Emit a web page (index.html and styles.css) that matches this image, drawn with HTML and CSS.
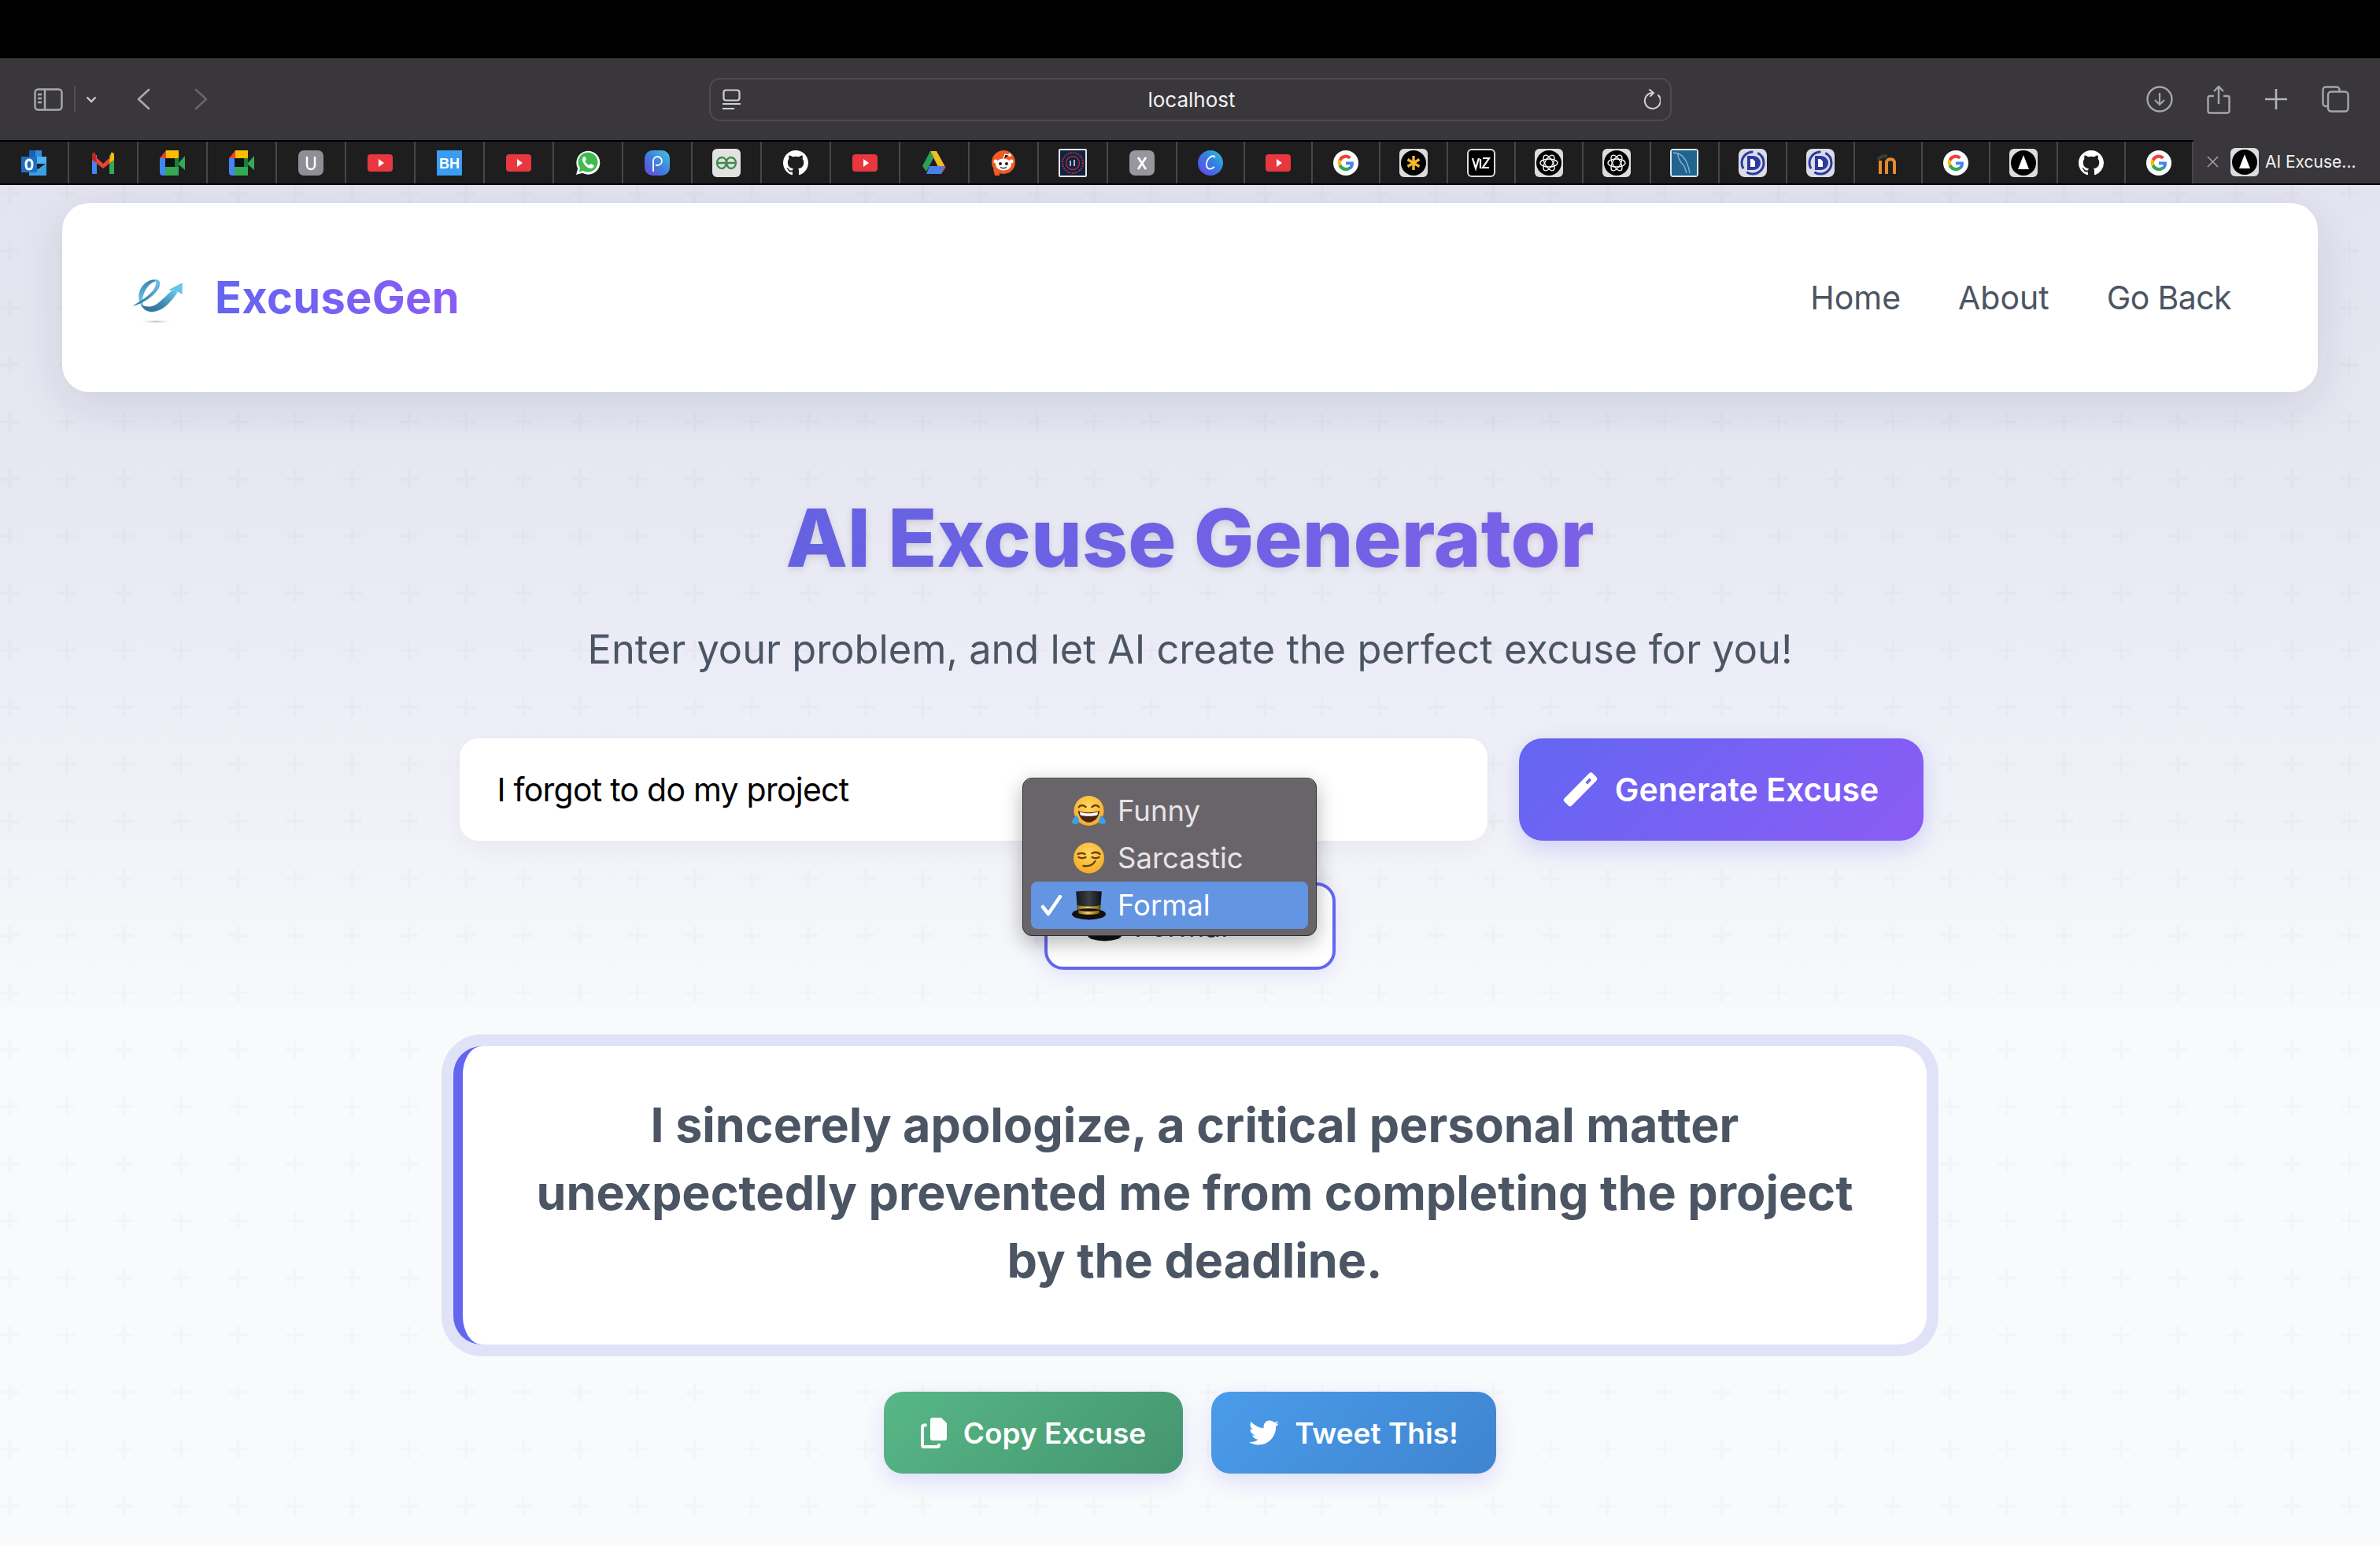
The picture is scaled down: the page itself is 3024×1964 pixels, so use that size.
FILE: index.html
```html
<!DOCTYPE html>
<html lang="en">
<head>
<meta charset="utf-8">
<title>AI Excuse Generator</title>
<link rel="stylesheet" href="styles.css">
</head>
<body>
<svg class="sprite" xmlns="http://www.w3.org/2000/svg">
  <defs>
    <linearGradient id="gp" x1="0" y1="1" x2="1" y2="0"><stop offset="0" stop-color="#6a45d8"/><stop offset=".5" stop-color="#3f7fe0"/><stop offset="1" stop-color="#46c8d8"/></linearGradient>
    <linearGradient id="gc" x1="0" y1="1" x2="1" y2="0"><stop offset="0" stop-color="#6a3cf0"/><stop offset=".6" stop-color="#2f86e0"/><stop offset="1" stop-color="#35c8d0"/></linearGradient>
    <linearGradient id="gl0" x1="0" y1="1" x2="1" y2="0"><stop offset="0" stop-color="#2b6a94"/><stop offset=".45" stop-color="#3f86ae"/><stop offset="1" stop-color="#6cc6ec"/></linearGradient>
    <linearGradient id="gl1" x1="0" y1="0" x2="0" y2="1"><stop offset="0" stop-color="#3b7fa9"/><stop offset=".6" stop-color="#5fb6dd"/><stop offset="1" stop-color="#7fd0f0"/></linearGradient>
    <linearGradient id="gl2" x1="1" y1="0" x2="0" y2="1"><stop offset="0" stop-color="#6ec8ee"/><stop offset=".5" stop-color="#4c98c2"/><stop offset="1" stop-color="#286490"/></linearGradient>
    <radialGradient id="gs"><stop offset="0" stop-color="#b9b9b9"/><stop offset="1" stop-color="#fff" stop-opacity="0"/></radialGradient>
    <radialGradient id="em" cx=".5" cy=".35" r=".7"><stop offset="0" stop-color="#ffd95e"/><stop offset="1" stop-color="#f5a623"/></radialGradient>
    <linearGradient id="gold" x1="0" y1="0" x2="1" y2="0"><stop offset="0" stop-color="#8a6410"/><stop offset=".45" stop-color="#f0d060"/><stop offset="1" stop-color="#7a5608"/></linearGradient>
    <linearGradient id="hat" x1="0" y1="0" x2="1" y2="0"><stop offset="0" stop-color="#15171b"/><stop offset=".5" stop-color="#3a3e46"/><stop offset="1" stop-color="#101114"/></linearGradient>
  </defs>
  <symbol id="i-outlook" viewBox="0 0 32 32"><path fill="#1b5fb0" d="M10 0h16v8H10z"/><path fill="#2f8fdc" d="M18 0h8v8h-8z"/><path fill="#1f79cc" d="M10 8h8v9h-8z"/><path fill="#52b2ee" d="M18 8h14v9H18z"/><path fill="#3aa0e6" d="M10 16l11 8 11-8v16H10z"/><path fill="#1f6fc0" d="M0 8h20v20H0z"/><path fill="none" stroke="#fff" stroke-width="3" d="M10 12c-3 0-4 2.500-4 6s1 6 4 6 4-2.500 4-6-1-6-4-6z"/></symbol>
  <symbol id="i-gmail" viewBox="0 0 32 32"><path fill="#4285f4" d="M2 6h6v24H2z"/><path fill="#34a853" d="M24 6h6v24h-6z"/><path fill="#ea4335" d="M2 4l14 13L30 4v8L16 23 2 12z"/><path fill="#fbbc04" d="M26 3c3-1 4 1 4 3v6l-6 4z"/><path fill="#c5221f" d="M6 3C3 2 2 4 2 6v6l6 4z"/></symbol>
  <symbol id="i-meet" viewBox="0 0 32 32"><path fill="#fbbc04" d="M8 0h16v10H8z"/><path fill="#ea4335" d="M0 10L8 0v10z"/><path fill="#4285f4" d="M0 10h7v22H4a4 4 0 0 1-4-4z"/><path fill="#34a853" d="M7 21h17v11H7z"/><path fill="#111" d="M7 10h12v11H7z"/><path fill="#34a853" d="M24 16l8-9v18l-8-7z"/><path fill="#188038" d="M19 10h5v11h-5z"/></symbol>
  <symbol id="i-u" viewBox="0 0 32 32"><rect width="32" height="32" rx="7" fill="#8e8e96"/><path fill="none" stroke="#fff" stroke-width="2.500" d="M11 8v11a5 5 0 0 0 10 0V8"/></symbol>
  <symbol id="i-yt" viewBox="0 0 32 32"><rect y="5" width="32" height="22" rx="4" fill="#e8373e"/><path fill="#fff" d="M14 11l7 5-7 5z"/></symbol>
  <symbol id="i-wa" viewBox="0 0 32 32"><path fill="#fff" d="M1 31l2.200-8A15 15 0 1 1 9 28.800z"/><path fill="#3fbb4f" d="M4.500 27.500l1.500-5A12.500 12.500 0 1 1 10 26z"/><path fill="#fff" d="M11 8c-1 .5-2.500 2-2 4.500 1 5 5 9.500 10 10.500 2.500.5 4-1 4.500-2.500l.3-1.500-4.300-2-1.800 2c-2.500-1-4.500-3-5.500-5.500l1.800-1.500L12.500 8z"/></symbol>
  <symbol id="i-p" viewBox="0 0 32 32"><rect width="32" height="32" rx="10" fill="url(#gp)"/><path fill="none" stroke="#fff" stroke-width="1.800" d="M11 27V13a5.500 5.500 0 1 1 5.500 6H14"/></symbol>
  <symbol id="i-gfg" viewBox="0 0 36 36"><rect width="36" height="36" rx="6" fill="#e2e2e0"/><path fill="none" stroke="#3f8b4f" stroke-width="2.300" d="M5 18h26M18 18c0-5-3-7-6-7s-6 3-6 7 3 7 6 7 5-2 6-7c1 5 3 7 6 7s6-3 6-7-3-7-6-7-6 2-6 7"/></symbol>
  <symbol id="i-gh" viewBox="0 0 16 16"><path fill="#fff" d="M8 0C3.580 0 0 3.580 0 8c0 3.540 2.290 6.530 5.470 7.590.4.070.55-.170.55-.380 0-.190-.010-.820-.010-1.490-2.010.370-2.530-.490-2.690-.940-.090-.230-.480-.940-.820-1.130-.280-.150-.680-.520-.010-.530.630-.010 1.080.580 1.230.820.720 1.210 1.870.870 2.330.660.070-.520.280-.870.510-1.070-1.780-.200-3.640-.890-3.640-3.950 0-.870.310-1.590.820-2.150-.080-.200-.360-1.020.080-2.120 0 0 .670-.210 2.200.820.640-.180 1.320-.270 2-.270s1.360.090 2 .270c1.530-1.040 2.200-.820 2.200-.820.440 1.100.160 1.920.080 2.120.510.560.820 1.270.820 2.150 0 3.070-1.870 3.750-3.650 3.950.290.250.540.730.540 1.480 0 1.070-.010 1.930-.010 2.200 0 .210.150.460.550.380A8.010 8.010 0 0 0 16 8c0-4.420-3.580-8-8-8z"/></symbol>
  <symbol id="i-drive" viewBox="0 0 32 32"><path fill="#f2bd1e" d="M11 1h8l11 20h-9z"/><path fill="#2f9e55" d="M11 1l4.500 8L6 27 1 20z"/><path fill="#4a7fe8" d="M10 20h20l-5 10H6z"/><path fill="#d94a38" d="M25 30l6-9h-3z"/></symbol>
  <symbol id="i-reddit" viewBox="0 0 32 32"><circle cx="16" cy="15" r="15" fill="#f25a23"/><path fill="#f25a23" d="M3 24h8v8H5z"/><ellipse cx="16" cy="18" rx="10" ry="7.500" fill="#fff"/><circle cx="6" cy="14" r="2.500" fill="#fff"/><circle cx="26" cy="14" r="2.500" fill="#fff"/><circle cx="12" cy="17" r="2" fill="#1e1e1f"/><circle cx="20" cy="17" r="2" fill="#1e1e1f"/><path fill="none" stroke="#1e1e1f" stroke-width="1.300" d="M12 21.500c2.500 1.500 5.500 1.500 8 0"/><path stroke="#fff" stroke-width="1.300" d="M16 11l2-6 5 1"/><circle cx="24" cy="6" r="2" fill="#fff"/></symbol>
  <symbol id="i-circle" viewBox="0 0 36 36"><rect width="36" height="36" rx="2" fill="#e8e8ec"/><rect x="2" y="2" width="32" height="32" fill="#0e2340"/><circle cx="18" cy="18" r="13" fill="none" stroke="#b4283c" stroke-width="2" stroke-dasharray="2 1.200"/><circle cx="18" cy="18" r="8.500" fill="none" stroke="#b4283c" stroke-width="1.500"/><path stroke="#e8e8ec" stroke-width="1.500" d="M15 15v7M20 14v8"/></symbol>
  <symbol id="i-x" viewBox="0 0 32 32"><rect width="32" height="32" rx="7" fill="#96969e"/><path stroke="#fff" stroke-width="2.800" fill="none" d="M11 9l10 15M21 9L11 24"/></symbol>
  <symbol id="i-canva" viewBox="0 0 32 32"><circle cx="16" cy="16" r="16" fill="url(#gc)"/><path fill="none" stroke="#fff" stroke-width="1.800" d="M22 9c-3-4-10 0-11 8-.6 6 4 9 10 4"/></symbol>
  <symbol id="i-g" viewBox="0 0 32 32"><circle cx="16" cy="16" r="16" fill="#fff"/><path fill="#4285f4" d="M26 16.400c0-.8-.1-1.400-.2-2H16v3.800h5.700c-.2 1.300-1 2.400-2.100 3.200l3.300 2.500c2-1.800 3.100-4.400 3.100-7.500z"/><path fill="#34a853" d="M16 26c2.700 0 5-.9 6.900-2.600l-3.300-2.500c-.9.600-2.100 1-3.600 1-2.700 0-5-1.800-5.800-4.300l-3.400 2.600C8.400 23.700 12 26 16 26z"/><path fill="#fbbc05" d="M10.200 17.600a6 6 0 0 1 0-3.800l-3.400-2.600a10 10 0 0 0 0 9z"/><path fill="#ea4335" d="M16 9.800c1.500 0 2.900.5 3.900 1.500l2.900-2.900A10 10 0 0 0 6.800 11.200l3.400 2.600C11 11.500 13.300 9.800 16 9.800z"/></symbol>
  <symbol id="i-star" viewBox="0 0 36 36"><rect width="36" height="36" rx="6" fill="#dcdcdc"/><circle cx="18" cy="18" r="16" fill="#000"/><path stroke="#f3b82c" stroke-width="3.400" d="M18 9v18M10.500 13.500l15 9M25.500 13.500l-15 9"/></symbol>
  <symbol id="i-v" viewBox="0 0 36 36"><rect width="36" height="36" rx="6" fill="#dcdcdc"/><rect x="2" y="2" width="32" height="32" rx="4" fill="#000"/><path fill="none" stroke="#fff" stroke-width="2.200" d="M7 12l4 13 4-13M17 13v12M20 12h8l-8 12h8"/></symbol>
  <symbol id="i-ai" viewBox="0 0 36 36"><rect width="36" height="36" rx="6" fill="#dcdcdc"/><circle cx="18" cy="18" r="16" fill="#000"/><g fill="none" stroke="#fff" stroke-width="1.300"><ellipse cx="18" cy="18" rx="11" ry="5"/><ellipse cx="18" cy="18" rx="11" ry="5" transform="rotate(60 18 18)"/><ellipse cx="18" cy="18" rx="11" ry="5" transform="rotate(120 18 18)"/></g></symbol>
  <symbol id="i-mysql" viewBox="0 0 36 36"><rect width="36" height="36" rx="4" fill="#dfe6ea"/><rect x="2" y="2" width="32" height="32" fill="#1f6590"/><path fill="none" stroke="#8fb4cc" stroke-width="1.300" d="M4 5c10 0 18 8 21 26M10 5c-1 6 3 12 8 17l3 9"/></symbol>
  <symbol id="i-d" viewBox="0 0 36 36"><rect width="36" height="36" rx="8" fill="#dcdce6"/><circle cx="18" cy="18" r="14" fill="none" stroke="#2b3a9e" stroke-width="3" stroke-dasharray="30 6"/><path fill="#2b3a9e" d="M11 9h8a9 9 0 0 1 0 18h-8z"/><path fill="#fff" d="M15 13h3l3 3v7h-6z"/></symbol>
  <symbol id="i-moodle" viewBox="0 0 32 32"><path fill="none" stroke="#e8892c" stroke-width="4" d="M6 30V13M14 30V15c0-5 10-5 10 0v15"/><path fill="none" stroke="#3c3c3c" stroke-width="4" d="M3 12c3-5 8-5 12-5"/></symbol>
  <symbol id="i-tri" viewBox="0 0 36 36"><rect width="36" height="36" rx="6" fill="#dcdcdc"/><circle cx="18" cy="18" r="16" fill="#000"/><path fill="#fff" d="M18 8l7 18H11z"/></symbol>

  <symbol id="e-joy" viewBox="0 0 44 40"><circle cx="22" cy="20" r="19.500" fill="url(#em)"/><path fill="none" stroke="#6b3f10" stroke-width="2.600" stroke-linecap="round" d="M9 15c2-3 6-3 9 0M26 15c3-3 7-3 9 0"/><path fill="#4a2410" d="M8 20c9 3 19 3 28 0-1 9-7 15-14 15S9 29 8 20z"/><path fill="#fff" d="M10 21.500c8 2.500 16 2.500 24 0l-1 4c-7 2-15 2-22 0z"/><path fill="#3e9ee8" d="M0 35c0-3 3-6 6-9 2 3 4 6 3 9-1 3-8 3-9 0zM44 35c0-3-3-6-6-9-2 3-4 6-3 9 1 3 8 3 9 0z"/></symbol>
  <symbol id="e-smirk" viewBox="0 0 40 40"><circle cx="20" cy="20" r="19.500" fill="url(#em)"/><path fill="none" stroke="#6b3f10" stroke-width="2.400" stroke-linecap="round" d="M6 15c3-1.500 6-1.500 9 0M24 14c3-1.500 7-1.500 10 1M7 19c3 1.500 6 1.500 9 0M24 19c3 1.500 6 1.500 9 0M13 30c6 1 12-1 15-6"/></symbol>
  <symbol id="e-hat" viewBox="0 0 42 36"><path fill="url(#hat)" d="M5 1c8-1 24-1 32 0l-2 24H7z"/><path fill="url(#gold)" d="M7 18c8 2 20 2 28 0l-1 10H8z"/><ellipse cx="21" cy="29" rx="21" ry="7" fill="#111"/><path fill="url(#gold)" d="M8 24c8 2 18 2 26 0v4c-8 2-18 2-26 0z"/></symbol>
</svg>

<div class="chrome-top"></div>

<div class="toolbar">
  <svg class="ic ic-side" viewBox="0 0 37 29"><rect x="1.500" y="1.500" width="34" height="26" rx="4" fill="none" stroke="#aaa" stroke-width="2.400"/><path stroke="#aaa" stroke-width="2.400" d="M14 1.500v26"/><path stroke="#aaa" stroke-width="2.400" d="M5 8h5M5 13h5M5 18h5"/></svg>
  <span class="tb-divider"></span>
  <svg class="ic ic-chev" viewBox="0 0 14 9"><path fill="none" stroke="#c9c9c9" stroke-width="2.400" d="M1.500 1.500L7 7l5.500-5.500"/></svg>
  <svg class="ic ic-back" viewBox="0 0 17 28"><path fill="none" stroke="#a9a9a9" stroke-width="2.600" stroke-linecap="round" stroke-linejoin="round" d="M15 2L2 14l13 12"/></svg>
  <svg class="ic ic-fwd" viewBox="0 0 17 28"><path fill="none" stroke="#66656a" stroke-width="2.600" stroke-linecap="round" stroke-linejoin="round" d="M2 2l13 12L2 26"/></svg>
  <div class="address">
    <svg class="ic ic-page" viewBox="0 0 23 27"><rect x="1.500" y="1.500" width="20" height="13" rx="3" fill="none" stroke="#cfcfcf" stroke-width="2.200"/><path stroke="#cfcfcf" stroke-width="2.200" d="M0 19h23M0 25h15"/></svg>
    <span class="url">localhost</span>
    <svg class="ic ic-reload" viewBox="0 0 23 27"><path fill="none" stroke="#d4d4d4" stroke-width="2" stroke-linecap="round" d="M13 5a10 10 0 1 0 7 3M9 1l5 4-4 4"/></svg>
  </div>
  <svg class="ic ic-dl" viewBox="0 0 34 34"><circle cx="17" cy="17" r="15.500" fill="none" stroke="#a6a6a6" stroke-width="2.400"/><path fill="none" stroke="#a6a6a6" stroke-width="2.200" d="M17 9v15M11 18l6 6 6-6"/></svg>
  <svg class="ic ic-share" viewBox="0 0 30 37"><path fill="none" stroke="#a6a6a6" stroke-width="2.400" d="M9 14H3.500A2 2 0 0 0 1.500 16v17a2.500 2.500 0 0 0 2.500 2.500h22a2.500 2.500 0 0 0 2.500-2.500V16a2 2 0 0 0-2-2H21M15 24V2M9 8l6-6 6 6"/></svg>
  <svg class="ic ic-plus" viewBox="0 0 28 26"><path stroke="#b5b5b5" stroke-width="2.600" d="M14 0v26M0 13h28"/></svg>
  <svg class="ic ic-tabs" viewBox="0 0 35 34"><path fill="none" stroke="#a6a6a6" stroke-width="2.400" d="M7 26H5a3.500 3.500 0 0 1-3.500-3.500V5A3.500 3.500 0 0 1 5 1.500h14A3.500 3.500 0 0 1 22.500 5v2"/><rect x="8" y="7.500" width="25.500" height="25" rx="4" fill="none" stroke="#a6a6a6" stroke-width="2.400"/></svg>
</div>

<nav class="tabs">
  <span class="tab"><svg class="fav"><use href="#i-outlook"/></svg></span>
  <span class="tab"><svg class="fav"><use href="#i-gmail"/></svg></span>
  <span class="tab"><svg class="fav"><use href="#i-meet"/></svg></span>
  <span class="tab"><svg class="fav"><use href="#i-meet"/></svg></span>
  <span class="tab"><svg class="fav"><use href="#i-u"/></svg></span>
  <span class="tab"><svg class="fav"><use href="#i-yt"/></svg></span>
  <span class="tab"><svg class="fav" viewBox="0 0 32 32"><rect width="32" height="32" fill="#3a9cf2"/><text x="16" y="23" text-anchor="middle" class="bh-text">BH</text></svg></span>
  <span class="tab"><svg class="fav"><use href="#i-yt"/></svg></span>
  <span class="tab"><svg class="fav"><use href="#i-wa"/></svg></span>
  <span class="tab"><svg class="fav"><use href="#i-p"/></svg></span>
  <span class="tab"><svg class="fav big"><use href="#i-gfg"/></svg></span>
  <span class="tab"><svg class="fav"><use href="#i-gh"/></svg></span>
  <span class="tab"><svg class="fav"><use href="#i-yt"/></svg></span>
  <span class="tab"><svg class="fav"><use href="#i-drive"/></svg></span>
  <span class="tab"><svg class="fav"><use href="#i-reddit"/></svg></span>
  <span class="tab"><svg class="fav big"><use href="#i-circle"/></svg></span>
  <span class="tab"><svg class="fav"><use href="#i-x"/></svg></span>
  <span class="tab narrow"><svg class="fav"><use href="#i-canva"/></svg></span>
  <span class="tab narrow"><svg class="fav"><use href="#i-yt"/></svg></span>
  <span class="tab narrow"><svg class="fav"><use href="#i-g"/></svg></span>
  <span class="tab narrow"><svg class="fav big"><use href="#i-star"/></svg></span>
  <span class="tab narrow"><svg class="fav big"><use href="#i-v"/></svg></span>
  <span class="tab narrow"><svg class="fav big"><use href="#i-ai"/></svg></span>
  <span class="tab narrow"><svg class="fav big"><use href="#i-ai"/></svg></span>
  <span class="tab narrow"><svg class="fav big"><use href="#i-mysql"/></svg></span>
  <span class="tab narrow"><svg class="fav big"><use href="#i-d"/></svg></span>
  <span class="tab narrow"><svg class="fav big"><use href="#i-d"/></svg></span>
  <span class="tab narrow"><svg class="fav"><use href="#i-moodle"/></svg></span>
  <span class="tab narrow"><svg class="fav"><use href="#i-g"/></svg></span>
  <span class="tab narrow"><svg class="fav big"><use href="#i-tri"/></svg></span>
  <span class="tab narrow"><svg class="fav"><use href="#i-gh"/></svg></span>
  <span class="tab narrow"><svg class="fav"><use href="#i-g"/></svg></span>
  <span class="tab-active">
    <svg class="tab-close" viewBox="0 0 16 16"><path stroke="#a8a8a8" stroke-width="1.500" d="M1 1l14 14M15 1L1 15"/></svg>
    <svg class="fav big"><use href="#i-tri"/></svg>
    <span class="tab-title">AI Excuse...</span>
  </span>
</nav>

<main class="page">
  <header class="site-header">
    <div class="brand">
      <svg class="brand-mark" viewBox="0 0 300 240">
        <path fill="url(#gl1)" d="M92 150C68 120 78 75 110 55c15-10 30-12 40-5-20 2-42 22-52 50-6 18-6 35 2 50z"/>
        <path fill="url(#gl2)" d="M138 46c17-4 27 9 20 26-10 26-53 63-103 74 30-16 65-41 80-61 10-15 15-30 3-39z"/>
        <path fill="url(#gl0)" d="M88 142c17 8 37 10 57-2 20-12 40-35 60-52l23 4c-23 33-53 76-103 76-17 0-30-10-37-26z"/>
        <path fill="#6ac4ea" d="M192 85l53-27v44l-17-10z"/>
        <ellipse cx="145" cy="206" rx="65" ry="8" fill="url(#gs)"/>
      </svg>
      <span class="brand-name">ExcuseGen</span>
    </div>
    <div class="site-links">
      <a class="site-link">Home</a>
      <a class="site-link">About</a>
      <a class="site-link tight">Go Back</a>
    </div>
  </header>

  <h1 class="title">AI Excuse Generator</h1>
  <p class="subtitle">Enter your problem, and let AI create the perfect excuse for you!</p>

  <div class="form-row">
    <div class="input">I forgot to do my project</div>
    <button class="btn btn-generate">
      <svg class="btn-wand" viewBox="0 0 44 44"><path fill="#fff" d="M33 1.500a3.500 3.500 0 0 1 4.800 0l4.400 4.600a3.500 3.500 0 0 1 0 4.800L11 42.500a3 3 0 0 1-4.300 0L1.700 37.400a3 3 0 0 1 0-4.200z"/><path fill="#6f63ec" d="M33.500 7.500l2.500 2.500-5 5.500-2.500-2.500z"/></svg>
      Generate Excuse
    </button>
  </div>

  <div class="select-wrap">
    <div class="select">
      <svg class="emoji"><use href="#e-hat"/></svg>
      <span>Formal</span>
    </div>
    <div class="menu">
      <div class="menu-item"><span class="check"></span><svg class="emoji"><use href="#e-joy"/></svg><span>Funny</span></div>
      <div class="menu-item"><span class="check"></span><svg class="emoji"><use href="#e-smirk"/></svg><span>Sarcastic</span></div>
      <div class="menu-item selected"><span class="check"><svg viewBox="0 0 28 28"><path fill="none" stroke="#fff" stroke-width="4.500" stroke-linecap="round" stroke-linejoin="round" d="M3 16l7 9L25 3"/></svg></span><svg class="emoji"><use href="#e-hat"/></svg><span>Formal</span></div>
    </div>
  </div>

  <section class="result">
    <p class="result-text">I sincerely apologize, a critical personal matter unexpectedly prevented me from completing the project by the deadline.</p>
  </section>

  <div class="actions">
    <button class="btn btn-copy">
      <svg class="btn-ico copy-ico" viewBox="0 0 34 39"><path fill="#fff" d="M15 0h11l7 7v19a3 3 0 0 1-3 3H15a3 3 0 0 1-3-3V3a3 3 0 0 1 3-3z"/><path fill="none" stroke="#fff" stroke-width="3.800" d="M7.500 9.500H4a2 2 0 0 0-2 2V35a2 2 0 0 0 2 2h17a2 2 0 0 0 2-2v-2"/></svg>
      Copy Excuse
    </button>
    <button class="btn btn-tweet">
      <svg class="btn-ico tw-ico" viewBox="0 0 512 512"><path fill="#fff" d="M459.370 151.716c.325 4.548.325 9.097.325 13.645 0 138.720-105.583 298.558-298.558 298.558-59.452 0-114.680-17.219-161.137-47.106 8.447.974 16.568 1.299 25.340 1.299 49.055 0 94.213-16.568 130.274-44.832-46.132-.975-84.792-31.188-98.112-72.772 6.498.974 12.995 1.624 19.818 1.624 9.421 0 18.843-1.300 27.614-3.573-48.081-9.747-84.143-51.980-84.143-102.985v-1.299c13.969 7.797 30.214 12.670 47.431 13.319-28.264-18.843-46.781-51.005-46.781-87.391 0-19.492 5.197-37.360 14.294-52.954 51.655 63.675 129.300 105.258 216.365 109.807-1.624-7.797-2.599-15.918-2.599-24.040 0-57.828 46.782-104.934 104.934-104.934 30.213 0 57.502 12.670 76.670 33.137 23.715-4.548 46.456-13.320 66.599-25.340-7.798 24.366-24.366 44.833-46.132 57.827 21.117-2.273 41.584-8.122 60.426-16.243-14.292 20.791-32.161 39.308-52.628 54.253z"/></svg>
      Tweet This!
    </button>
  </div>
</main>
</body>
</html>
```

FILE: styles.css
```css
* { box-sizing: border-box; }
html, body { margin: 0; padding: 0; }
body {
  width: 3024px;
  height: 1964px;
  overflow: hidden;
  font-family: Inter, "Liberation Sans", sans-serif;
  background: #f9fafc;
}
.sprite { position: absolute; width: 0; height: 0; }
.bh-text { font: 700 18px "Liberation Sans", sans-serif; fill: #fff; }

.chrome-top { height: 74px; background: #000; }

.toolbar {
  height: 104px;
  background: #39373b;
  display: flex;
  align-items: center;
  padding-left: 43px;
}
.ic { display: block; flex: none; }
.ic-side { width: 37px; height: 29px; }
.tb-divider { width: 2px; height: 34px; background: #4f4d52; margin-left: 14px; }
.ic-chev { width: 14px; height: 9px; margin-left: 13px; }
.ic-back { width: 17px; height: 28px; margin-left: 51px; }
.ic-fwd { width: 17px; height: 28px; margin-left: 56px; }
.address {
  width: 1223px;
  height: 55px;
  margin-left: 637px;
  border: 2px solid #4d4b50;
  border-radius: 14px;
  display: flex;
  align-items: center;
  padding: 0 12px 0 15px;
}
.ic-page { width: 23px; height: 27px; }
.ic-reload { width: 23px; height: 27px; }
.url { flex: 1; text-align: center; color: #f2f2f2; font-size: 26px; }
.ic-dl { width: 34px; height: 34px; margin-left: 603px; }
.ic-share { width: 30px; height: 37px; margin-left: 43px; }
.ic-plus { width: 28px; height: 26px; margin-left: 44px; }
.ic-tabs { width: 35px; height: 34px; margin-left: 44px; }

.tabs {
  height: 57px;
  display: flex;
  background: #1e1e1f;
  border-top: 2px solid #000;
  border-bottom: 2px solid #000;
}
.tab {
  width: 88px;
  flex: none;
  display: flex;
  align-items: center;
  justify-content: center;
  border-right: 2px solid #47474a;
}
.tab.narrow { width: 86.07px; }
.fav { width: 32px; height: 32px; flex: none; }
.fav.big { width: 36px; height: 36px; }
.tab-active {
  flex: 1;
  background: #39373b;
  display: flex;
  align-items: center;
  padding-left: 17px;
  margin: -2px 0 0;
}
.tab-close { width: 15px; height: 15px; margin-right: 15px; flex: none; }
.tab-title { color: #f2f2f2; font-size: 21px; margin-left: 8px; white-space: nowrap; }

.page {
  height: 1729px;
  padding: 23px 79px 0;
  display: flex;
  flex-direction: column;
  align-items: center;
  background-color: #f9fafc;
  background-image:
    url("data:image/svg+xml,%3Csvg xmlns='http://www.w3.org/2000/svg' width='72.5' height='72.5'%3E%3Cpath fill='%23000' fill-opacity='.02' d='M34.250 24.250h4v10h10v4h-10v10h-4v-10h-10v-4h10z'/%3E%3C/svg%3E"),
    linear-gradient(180deg, #e3e4ef 0, #e6e7f1 20%, #ecedf6 37%, #f3f4f9 50%, #f9fafc 63%, #f9fafc 100%);
  background-size: 72.5px 72.5px, 100% 100%;
  background-position: -23.750px -25.250px, 0 0;
}

.site-header {
  width: 2866px;
  height: 240px;
  flex: none;
  background: #fff;
  border-radius: 34px;
  box-shadow: 0 16px 60px rgba(30, 30, 70, 0.11);
  display: flex;
  align-items: center;
  justify-content: space-between;
  padding: 0 110px 0 71px;
}
.brand { display: flex; align-items: center; gap: 23px; }
.brand-mark { width: 100px; height: 80px; margin-top: 4px; flex: none; }
.brand-name {
  font-size: 56px;
  font-weight: 700;
  letter-spacing: 0.3px;
  background: linear-gradient(90deg, #6366f1, #8b5cf6);
  -webkit-background-clip: text;
  background-clip: text;
  color: transparent;
}
.site-links { display: flex; gap: 73px; }
.site-link { color: #4b5563; font-size: 41px; }
.site-link.tight { letter-spacing: -0.6px; }

.title {
  margin: 116px 0 0;
  font-size: 102px;
  line-height: 138px;
  font-weight: 800;
  background: linear-gradient(90deg, #6562e2, #7b60e8);
  -webkit-background-clip: text;
  background-clip: text;
  color: transparent;
  filter: drop-shadow(0 3px 5px rgba(0, 0, 0, 0.12));
}
.subtitle {
  margin: 37px 0 0;
  color: #4b5563;
  font-size: 50.500px;
  line-height: 72px;
}

.form-row {
  width: 1860px;
  margin: 77px 0 0 3px;
  display: flex;
  gap: 40px;
  flex: none;
}
.input {
  width: 1306px;
  height: 130px;
  flex: none;
  background: #fff;
  border-radius: 24px;
  box-shadow: 0 8px 30px rgba(40, 40, 90, 0.05);
  display: flex;
  align-items: center;
  padding-left: 48px;
  font-size: 41px;
  letter-spacing: -0.760px;
  color: #000;
}
.btn {
  border: 0;
  color: #fff;
  font-family: Inter, "Liberation Sans", sans-serif;
  font-weight: 600;
  display: flex;
  align-items: center;
  justify-content: center;
}
.btn-generate {
  width: 514px;
  height: 130px;
  border-radius: 30px;
  font-size: 41px;
  gap: 22px;
  background: linear-gradient(135deg, #6366f1, #8b5cf6);
  box-shadow: 0 10px 30px rgba(99, 102, 241, 0.25);
}
.btn-wand { width: 44px; height: 44px; }

.select-wrap { position: relative; width: 370px; margin-top: 53px; flex: none; }
.select {
  width: 370px;
  height: 111px;
  background: #fff;
  border: 4px solid #6366f1;
  border-radius: 24px;
  box-shadow: 0 6px 24px rgba(99, 102, 241, 0.15);
  display: flex;
  align-items: center;
  gap: 16px;
  padding-left: 51px;
  font-size: 37px;
  color: #333;
}
.emoji { width: 43px; height: 40px; flex: none; }
.menu {
  position: absolute;
  left: -28px;
  top: -133px;
  width: 374px;
  height: 201px;
  padding: 11px 10px;
  background: #69646a;
  border: 1.500px solid #2c2b2d;
  border-radius: 12px;
  box-shadow: inset 0 1px 0 #8a878b, 0 8px 26px rgba(0, 0, 0, 0.3);
  font-size: 36.500px;
}
.menu-item {
  height: 60px;
  display: flex;
  align-items: center;
  gap: 15px;
  color: #e6e4e6;
  padding-left: 12px;
  border-radius: 8px;
}
.menu-item.selected { background: #6495e3; color: #fff; }
.check { width: 28px; height: 28px; flex: none; margin-right: -3px; }
.check svg { display: block; width: 28px; height: 28px; }

.result {
  width: 1872px;
  height: 379px;
  margin-top: 97px;
  flex: none;
  background: #fff;
  border-left: 12px solid #6366f1;
  border-radius: 36px;
  box-shadow: 0 0 0 15px #e0e3f7;
  display: flex;
  align-items: center;
  justify-content: center;
  padding: 0 70px 8px;
}
.result-text {
  margin: 0;
  text-align: center;
  color: #4b5563;
  font-size: 61px;
  line-height: 86px;
  font-weight: 700;
}

.actions { display: flex; gap: 36px; margin-top: 60px; flex: none; }
.btn-copy, .btn-tweet {
  height: 104px;
  border-radius: 24px;
  font-size: 37px;
  gap: 20px;
  box-shadow: 0 10px 26px rgba(99, 102, 241, 0.18);
}
.btn-copy { width: 380px; background: linear-gradient(135deg, #57b787, #45956f); }
.btn-tweet { width: 362px; background: linear-gradient(135deg, #4a9cea, #3f84d0); }
.copy-ico { width: 34px; height: 39px; }
.tw-ico { width: 38px; height: 38px; }
```
